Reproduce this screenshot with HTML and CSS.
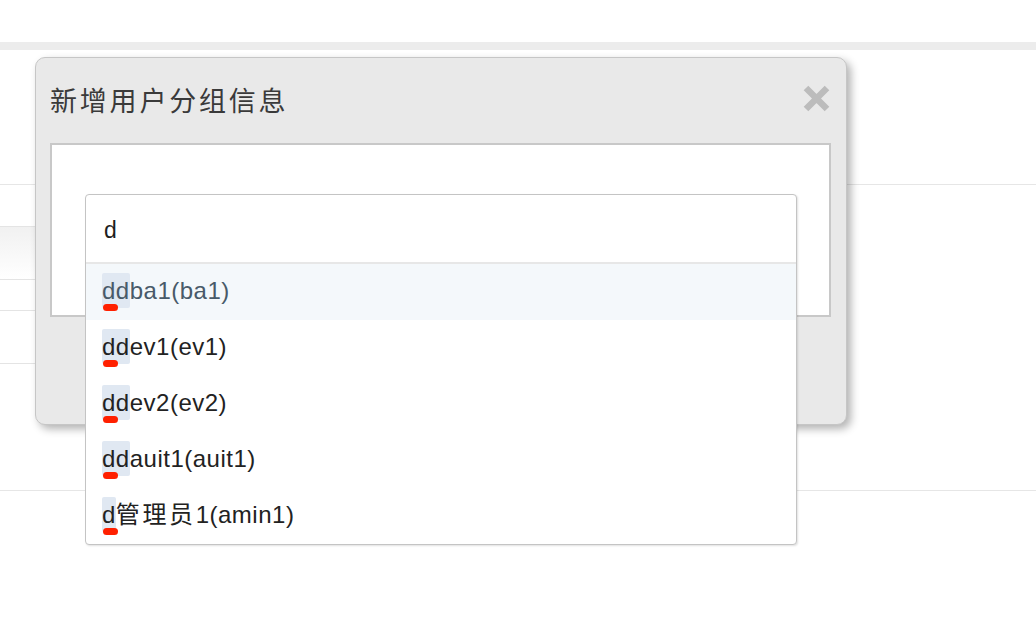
FILE: index.html
```html
<!DOCTYPE html>
<html lang="zh-CN">
<head>
<meta charset="utf-8">
<title>新增用户分组信息</title>
<link rel="stylesheet" href="styles.css">
</head>
<body>
<div class="page">
  <div class="top-gap"></div>
  <div class="top-bar"></div>
  <div class="header-space"></div>
  <div class="table">
    <div class="row row-a"></div>
    <div class="row row-head"></div>
    <div class="row row-b"></div>
    <div class="row row-c"></div>
  </div>
  <div class="tail-space"></div>
  <div class="bottom-line"></div>
</div>

<div class="dialog">
  <div class="dialog-head">
    <h3 class="dialog-title">新增用户分组信息</h3>
    <span class="dialog-close" aria-label="close">
      <svg width="27" height="27" viewBox="0 0 27 27"><path d="M3 3 L24 24 M24 3 L3 24" stroke="#bcbcbc" stroke-width="6.5" stroke-linecap="butt" fill="none"/></svg>
    </span>
  </div>
  <div class="dialog-body">
    <div class="combo">
      <div class="combo-input">d</div>
      <ul class="combo-list">
        <li class="combo-item active"><span class="mark"><span class="squiggle"></span>dd</span>ba1(ba1)</li>
        <li class="combo-item"><span class="mark"><span class="squiggle"></span>dd</span>ev1(ev1)</li>
        <li class="combo-item"><span class="mark"><span class="squiggle"></span>dd</span>ev2(ev2)</li>
        <li class="combo-item"><span class="mark"><span class="squiggle"></span>dd</span>auit1(auit1)</li>
        <li class="combo-item"><span class="mark"><span class="squiggle"></span>d</span><span class="cjk">管理员</span>1(amin1)</li>
      </ul>
    </div>
  </div>
  <div class="dialog-foot"></div>
</div>
</body>
</html>
```
FILE: styles.css
```css
html, body {
  margin: 0;
  padding: 0;
  background: #ffffff;
  font-family: "Liberation Sans", "Noto Sans CJK SC", sans-serif;
}

.page {
  width: 1036px;
  height: 628px;
  overflow: hidden;
}

.top-gap { height: 42px; }
.top-bar { height: 8px; background: #ececec; }
.header-space { height: 134px; border-bottom: 1px solid #e6e6e6; }

.table { width: 420px; }
.row { border-bottom: 1px solid #e4e4e4; }
.row-a { height: 41px; }
.row-head { height: 52px; background: linear-gradient(#f1f1f1, #ffffff); }
.row-b { height: 30px; }
.row-c { height: 52px; }

.tail-space { height: 126px; }
.bottom-line { height: 1px; background: #e6e6e6; }

/* dialog overlay */
.dialog {
  position: absolute;
  left: 35px;
  top: 57px;
  width: 810px;
  height: 366px;
  background: #e9e9e9;
  border: 1px solid #c6c6c6;
  border-radius: 10px;
  box-shadow: 4px 4px 8px rgba(0, 0, 0, 0.3);
  display: flex;
  flex-direction: column;
}

.dialog-head {
  height: 85px;
  display: flex;
  align-items: center;
  justify-content: space-between;
  padding: 0 16px 0 14px;
}

.dialog-title {
  margin: 0;
  font-family: "Noto Sans CJK SC", sans-serif;
  font-weight: 400;
  font-size: 27px;
  letter-spacing: 2.8px;
  color: #3a3a3a;
  line-height: 1;
  margin-top: -2px;
}

.dialog-close {
  display: block;
  width: 27px;
  height: 27px;
  margin-top: -5px;
}
.dialog-close svg { display: block; }

.dialog-body {
  position: relative;
  margin: 0 15px 0 14px;
  height: 170px;
  background: #ffffff;
  border: 2px solid #c8c8c8;
}

.dialog-foot { flex: 1; }

/* combo / dropdown */
.combo {
  position: absolute;
  left: 33px;
  top: 49px;
  width: 710px;
  background: #ffffff;
  border: 1px solid #c4c4c4;
  border-radius: 4px;
  box-shadow: 1px 1px 2px rgba(0, 0, 0, 0.12);
  z-index: 5;
}

.combo-input {
  height: 64px;
  padding: 3px 0 0 18px;
  font-size: 23px;
  line-height: 64px;
  color: #1e1e1e;
  border-bottom: 2px solid #e7e7e7;
}

.combo-list {
  list-style: none;
  margin: 0;
  padding: 0;
}

.combo-item {
  height: 56px;
  box-sizing: border-box;
  padding: 9px 0 0 16px;
  font-size: 24px;
  letter-spacing: 0.5px;
  line-height: 35px;
  color: #222222;
  white-space: nowrap;
}

.combo-item.active {
  background: #f4f8fb;
  color: #485a69;
}

.cjk { letter-spacing: 2.6px; }

.mark {
  position: relative;
  display: inline-block;
  height: 35px;
  background: #e0e8f2;
  border-radius: 2px;
}

.squiggle {
  position: absolute;
  left: 1px;
  top: 31px;
  width: 15px;
  height: 7px;
  border-radius: 4px;
  background: #ff2000;
}
```
